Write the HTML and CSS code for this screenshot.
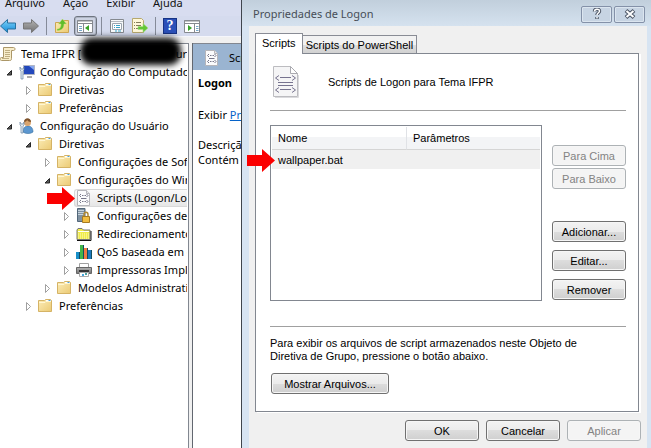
FILE: index.html
```html
<!DOCTYPE html>
<html lang="pt-BR">
<head>
<meta charset="utf-8">
<title>Propriedades de Logon</title>
<link rel="stylesheet" href="styles.css">
</head>
<body>
<svg class="defs" aria-hidden="true">
  <defs>
    <linearGradient id="gold" x1="0" y1="0" x2="1" y2="1"><stop offset="0" stop-color="#fcedb8"/><stop offset="1" stop-color="#ebca74"/></linearGradient>
    <linearGradient id="sky" x1="0" y1="0" x2="0" y2="1"><stop offset="0" stop-color="#7fd4fa"/><stop offset="1" stop-color="#148bd8"/></linearGradient>
    <linearGradient id="steel" x1="0" y1="0" x2="0" y2="1"><stop offset="0" stop-color="#b4b4b4"/><stop offset="1" stop-color="#717171"/></linearGradient>
  </defs>
  <symbol id="folder" viewBox="0 0 16 16">
    <path d="M.5 13.500v-11h6l1-1h5l1 1v11z" fill="url(#gold)" stroke="#d5b365"/>
    <path d="M8 2.500h5" stroke="#fff"/><path d="M10.500 2.500h2" stroke="#4ba0dc"/>
    <path d="M1 4.500h6l1-1h5" fill="none" stroke="#fff6d2"/>
  </symbol>
  <symbol id="script" viewBox="0 0 16 16">
    <path d="M1.500.500h9l3 3v12h-12z" fill="#fbfbfc" stroke="#b5b5ba"/>
    <path d="M10.500.500v3h3" fill="#e7e7ea" stroke="#b5b5ba"/>
    <path d="M5 4 3.500 5.500 5 7M10.500 4 12 5.500 10.500 7M6 5.500h1.500m1 0H10M5 8.500h5.500M5 10l-1.500 1.500L5 13M10.500 10l1.500 1.500-1.500 1.500M6 11.500h1.500m1 0H10" fill="none" stroke="#77778a"/>
  </symbol>
  <symbol id="closed" viewBox="0 0 8 10"><path d="M1.500 1.500 5.500 5.500 1.500 9.500z" fill="#fff" stroke="#a0a0a0"/></symbol>
  <symbol id="open" viewBox="0 0 8 10"><path d="M5.500 3.500v4.500H1z" fill="#595959" stroke="#262626"/></symbol>
  <symbol id="pointer" viewBox="0 0 28 23"><path d="M0 6h15V0l13 11.500L15 23v-6H0z" fill="#fb0000"/></symbol>
</svg>
<div class="desktop">
  <div class="console">
    <nav class="menu">
      <a href="#">Arquivo</a><a href="#">Ação</a><a href="#">Exibir</a><a href="#">Ajuda</a>
    </nav>
    <div class="toolbar">
      <button class="tool" aria-label="Voltar"><svg viewBox="0 0 16 16"><path d="M.5 8 7.500 1.500V5h8v6h-8v3.500z" fill="url(#sky)" stroke="#28719f"/></svg></button>
      <button class="tool" aria-label="Avançar"><svg viewBox="0 0 16 16"><path d="M15.500 8 8.500 1.500V5h-8v6h8v3.500z" fill="url(#steel)" stroke="#777"/></svg></button>
      <i class="sep"></i>
      <button class="tool" aria-label="Um nível acima"><svg viewBox="0 0 16 16"><path d="M1.500 14.500v-10H7l1-2h6.500v12z" fill="url(#gold)" stroke="#cda653"/><path d="M3 11c3 0 4-2 4-5H4.500L8.500 1l4 5H10c0 4-2 6.500-7 6.500z" fill="#60bd2b" stroke="#c7dc76" stroke-width=".5"/></svg></button>
      <button class="tool pressed" aria-label="Mostrar árvore" aria-pressed="true"><svg viewBox="0 0 16 16"><path d="M.5 2.500h15v12H.5z" fill="#fff" stroke="#85898f"/><path d="M0 3h16M0 5.500h16M6.500 6v9" stroke="#85898f"/><path d="M2 8.500h3M2 10.500h3M2 12.500h3" stroke="#75a6c8"/><path d="M12 7v6L8 10z" fill="#3aa329"/></svg></button>
      <i class="sep"></i>
      <button class="tool" aria-label="Propriedades"><svg viewBox="0 0 16 16"><path d="M1.500 1.500h13v13h-13z" fill="#f8fafb" stroke="#85898f"/><path d="M2 3.500h12" stroke="#b6bbc1"/><path d="M3.500 5.500h9v6h-9z" fill="#fff" stroke="#9da6b0"/><path d="M5 7.500h1m1 0h4M5 9.500h1m1 0h4M6 13h2m1 0h3" stroke="#39a3c7"/></svg></button>
      <button class="tool" aria-label="Exportar lista"><svg viewBox="0 0 16 16"><path d="M.5.500h9l2 2v12H.5z" fill="#fff8d8" stroke="#b6a86e"/><path d="M2 4.500h1m1 0h5M2 7.500h1m1 0h5M2 10.500h1m1 0h5" stroke="#857d5b"/><path d="M6 8.500h5V5.500l5 4.500-5 4.500v-3H6z" fill="#62c735" stroke="#a7da87" stroke-width=".6"/></svg></button>
      <i class="sep"></i>
      <button class="tool help" aria-label="Ajuda">?</button>
      <button class="tool" aria-label="Mostrar painel de ações"><svg viewBox="0 0 16 16"><path d="M.5 2.500h15v12H.5z" fill="#fff" stroke="#85898f"/><path d="M0 3h16M0 5.500h16M10.500 6v9" stroke="#85898f"/><path d="M12 8.500h2.500M12 10.500h2.500M12 12.500h2.500" stroke="#75a6c8"/><path d="M4 7v6l4-3z" fill="#3aa329"/></svg></button>
    </div>
    <div class="panes">
      <ul class="tree">
        <li class="row root"><svg class="icon" viewBox="0 0 16 16"><path d="M3.500 1.500h10c2 0 2 3 0 3h-2v8c0 2-1 2-2 2h-8c-2 0-2-3 0-3h2z" fill="#f8edca" stroke="#ab9768"/><path d="M5 4.500h5M5 6.500h5M5 8.500h5M5 10.500h5M2 12.500h7" stroke="#bfae82"/></svg><span>Tema IFPR [</span><span class="tail">ur</span><i class="blot"></i></li>
        <li class="row l1"><svg class="twist"><use href="#open"/></svg><svg class="icon" viewBox="0 0 16 16"><path d="M4.500 1.500h11v9h-11z" fill="#2348bc" stroke="#b0b5c4"/><path d="M10 2h5v4z" fill="#86a7f1"/><path d="M8 12h5v2H8z" fill="#aaa"/><path d="M1 3v3l1 1v8h2V7l1-1V3L4 5H2z" fill="#e5edf4" stroke="#6884a0" stroke-width=".7"/></svg><span>Configuração do Computador</span></li>
        <li class="row l2"><svg class="twist"><use href="#closed"/></svg><svg class="icon"><use href="#folder"/></svg><span>Diretivas</span></li>
        <li class="row l2"><svg class="twist"><use href="#closed"/></svg><svg class="icon"><use href="#folder"/></svg><span>Preferências</span></li>
        <li class="row l1"><svg class="twist"><use href="#open"/></svg><svg class="icon" viewBox="0 0 16 16"><path d="M4 14c0-4 2-6 5-6s5 2 5 6c-3 2-7 2-10 0z" fill="#5c97d0" stroke="#39709f" stroke-width=".6"/><circle cx="8.500" cy="4.500" r="3.500" fill="#d9a46d"/><path d="M5 4c0-5 7-5 7 0-2 0-3-1-4-2 0 1-2 2-3 2z" fill="#7d522b"/><path d="M1 4v3l1 1v7h2V8l1-1V4L4 6H2z" fill="#e5edf4" stroke="#6884a0" stroke-width=".7"/></svg><span>Configuração do Usuário</span></li>
        <li class="row l2"><svg class="twist"><use href="#open"/></svg><svg class="icon"><use href="#folder"/></svg><span>Diretivas</span></li>
        <li class="row l3"><svg class="twist"><use href="#closed"/></svg><svg class="icon"><use href="#folder"/></svg><span>Configurações de Software</span></li>
        <li class="row l3"><svg class="twist"><use href="#open"/></svg><svg class="icon"><use href="#folder"/></svg><span>Configurações do Windows</span></li>
        <li class="row l4 selected"><svg class="arrow"><use href="#pointer"/></svg><i class="twist"></i><svg class="icon"><use href="#script"/></svg><span>Scripts (Logon/Logoff)</span></li>
        <li class="row l4"><svg class="twist"><use href="#closed"/></svg><svg class="icon" viewBox="0 0 16 16"><path d="M1.500.500H9v13H1.500z" fill="#8192a1" stroke="#52677a"/><path d="M2 2.500h6M2 4.500h6M2 6.500h6" stroke="#c7d4de"/><path d="M8 9V6.500c0-3 4-3 4 0V9" fill="none" stroke="#b08a35" stroke-width="1.500"/><path d="M6.500 8.500h7v6h-7z" fill="#f1bd41" stroke="#a67b22"/></svg><span>Configurações de Segurança</span></li>
        <li class="row l4"><svg class="twist"><use href="#closed"/></svg><svg class="icon" viewBox="0 0 16 16"><path d="M1 13.500V4l1-1.500h4L7.500 4H14v9.500z" fill="#f0ec4b" stroke="#777"/><path d="M2 5.500h11" stroke="#fff"/><path d="M2 8h11M2 10h11M2 12h11" stroke="#fffbc2" stroke-dasharray="1 1"/><path d="M1 14.500h14V5" fill="none" stroke="#111"/></svg><span>Redirecionamento de Pasta</span></li>
        <li class="row l4"><svg class="twist"><use href="#closed"/></svg><svg class="icon" viewBox="0 0 16 16"><path d="M0 8h4v7H0z" fill="#188fc8"/><path d="M4 1h4v14H4z" fill="#43b649"/><path d="M8 4h4v11H8z" fill="#f27a43"/><path d="M12 6h4v9h-4z" fill="#1d78bd"/><path d="M3.500 8v7M7.500 1v14M11.500 4v11M15.500 6v9" stroke="#124d60"/></svg><span>QoS baseada em diretiva</span></li>
        <li class="row l4"><svg class="twist"><use href="#closed"/></svg><svg class="icon" viewBox="0 0 16 16"><path d="M3.500 1.500h9v4h-9z" fill="#fff" stroke="#a1a1a1"/><path d="M.5 5.500h15v6H.5z" fill="url(#steel)" stroke="#666"/><path d="M3 8h10v2H3z" fill="#343434"/><path d="M3.500 10.500h9v4h-9z" fill="#fff" stroke="#aaa"/><path d="M6 12h2v2H6z" fill="#47a6dc"/><path d="M9 11h2v2H9z" fill="#4ba19c"/></svg><span>Impressoras Implantadas</span></li>
        <li class="row l3"><svg class="twist"><use href="#closed"/></svg><svg class="icon"><use href="#folder"/></svg><span>Modelos Administrativos</span></li>
        <li class="row l2"><svg class="twist"><use href="#closed"/></svg><svg class="icon"><use href="#folder"/></svg><span>Preferências</span></li>
      </ul>
      <section class="detail">
        <header><svg class="icon"><use href="#script"/></svg><span>Scripts</span></header>
        <div class="info">
          <h2>Logon</h2>
          <p>Exibir <a href="#">Propriedades</a></p>
          <p>Descrição:<br>Contém</p>
        </div>
      </section>
    </div>
  </div>

  <section class="dialog">
    <header class="title">
      <h1>Propriedades de Logon</h1>
      <button class="caption" aria-label="Ajuda"><svg viewBox="0 0 12 12"><path d="M3.500 3.500c0-3 5-3 5-.5 0 2-2.500 2-2.500 4M6 9v2" fill="none" stroke="#4c5565" stroke-width="3.500"/><path d="M3.500 3.500c0-3 5-3 5-.5 0 2-2.500 2-2.500 4M6 9v1.500" fill="none" stroke="#fff" stroke-width="1.500"/></svg></button>
      <button class="caption" aria-label="Fechar"><svg viewBox="0 0 12 12"><path d="m2 2.500 8 7m0-7-8 7" stroke="#4c5565" stroke-width="4"/><path d="m2.500 3 7 6m0-6-7 6" stroke="#fff" stroke-width="2"/></svg></button>
    </header>
    <div class="body">
      <div class="tabs" role="tablist">
        <button class="tab active" role="tab" aria-selected="true">Scripts</button><button class="tab" role="tab" aria-selected="false">Scripts do PowerShell</button>
      </div>
      <div class="panel" role="tabpanel">
        <div class="intro">
          <svg class="document" viewBox="0 0 26 32"><path d="M.5.500h17l7 7v23H.5z" fill="#f5f5f6" stroke="#bcbcc0"/><path d="M2 31.500h23.500V9" fill="none" stroke="#dadadd"/><path d="M17.500.500v7h7z" fill="#fff" stroke="#aaaab0"/><path d="M6 9.500 2.500 12 6 14.500M19 9.500l3.500 2.500-3.500 2.500M7 11.500h11M5 16.500h15M5 19.500h15M6 21.500 2.500 24 6 26.500M19 21.500l3.500 2.500-3.500 2.500M7 23.500h11" fill="none" stroke="#77738f"/></svg>
          <span>Scripts de Logon para Tema IFPR</span>
        </div>
        <hr>
        <div class="work">
          <div class="list">
            <svg class="arrow"><use href="#pointer"/></svg>
            <table>
              <thead><tr><th>Nome</th><th>Parâmetros</th></tr></thead>
              <tbody><tr><td>wallpaper.bat</td><td></td></tr></tbody>
            </table>
          </div>
          <div class="actions">
            <div class="order"><button class="btn" disabled>Para Cima</button><button class="btn" disabled>Para Baixo</button></div>
            <div class="edit"><button class="btn">Adicionar...</button><button class="btn">Editar...</button><button class="btn">Remover</button></div>
          </div>
        </div>
        <hr class="lower">
        <p class="note">Para exibir os arquivos de script armazenados neste Objeto de Diretiva de Grupo, pressione o botão abaixo.</p>
        <button class="btn wide">Mostrar Arquivos...</button>
      </div>
      <footer><button class="btn">OK</button><button class="btn">Cancelar</button><button class="btn" disabled>Aplicar</button></footer>
    </div>
  </section>
</div>
</body>
</html>
```
FILE: styles.css
```css
* { box-sizing: border-box; }
body { margin: 0; font: 11px/18px "Noto Sans", "Open Sans", sans-serif; color: #000; }
button { font: inherit; color: inherit; padding: 0; border: 0; background: none; }
h1, h2, p, ul { margin: 0; padding: 0; }
svg { display: block; }
.defs { position: absolute; width: 0; height: 0; }
.desktop { display: grid; grid-template-columns: 241px minmax(0, 1fr); min-height: 100vh; overflow: hidden; }

.console { display: flex; flex-direction: column; min-width: 0; overflow: hidden; background: #f0f0f0; }
.menu { display: flex; gap: 18px; height: 16px; padding-left: 5px; overflow: hidden; background: #d8ddf0; line-height: 5px; }
.menu a { color: #111; text-decoration: none; }
.toolbar { display: flex; align-items: center; gap: 7px; height: 21px; background: #d5dbee; border-bottom: 1px solid #f5f6fb; }
.tool { width: 16px; height: 16px; flex: none; }
.tool svg { width: 16px; height: 16px; }
.pressed { width: 23px; height: 20px; margin: 0 -3px; padding: 1px 2px; border: 1px solid #6f7580; border-radius: 3px; background: #cdd3e2; box-shadow: inset 0 0 0 1px #aeb5c4; }
.sep { width: 1px; height: 18px; background: #858b99; flex: none; }
.help { width: 14px; color: #fff; background: #2b50b8; border: 1px solid #183485; font: bold 14px/14px "Liberation Serif", serif; text-align: center; }

.panes { display: grid; grid-template-columns: 189px minmax(0, 1fr); gap: 3px; flex: 1; margin-top: 6px; }
.tree { list-style: none; min-width: 0; padding-top: 1px; background: #fff; border-top: 1px solid #828790; border-right: 1px solid #828790; }
.row { position: relative; display: flex; align-items: center; height: 18px; white-space: nowrap; margin-right: 1px; }
.row > span { min-width: 0; overflow: hidden; }
.icon { width: 16px; height: 16px; flex: none; margin-right: 5px; }
.twist { width: 8px; height: 10px; flex: none; margin: 0 5px 0 6px; }
.l2 { padding-left: 19px; }
.l3 { padding-left: 38px; }
.l4 { padding-left: 57px; }
.selected::before { content: ""; position: absolute; inset: 0 0 0 74px; border: 1px solid #d9d9d9; border-right: 0; border-radius: 3px 0 0 3px; background: linear-gradient(#fafafa, #e6e6e6); }
.selected > * { position: relative; }
.arrow { position: absolute; z-index: 2; width: 28px; height: 23px; }
.row .arrow { position: absolute; left: 47px; top: -2px; }
.row .tail { margin-left: auto; }
.blot { position: absolute; z-index: 1; left: 80px; right: 6px; top: -7px; height: 27px; border-radius: 12px; background: #000; filter: blur(3px); }

.detail { min-width: 0; overflow: hidden; background: #fff; border-left: 1px solid #626770; white-space: nowrap; }
.detail header { display: flex; align-items: center; height: 27px; padding-left: 11px; padding-top: 2px; background: #9ab4d1; border-top: 1px solid #828790; }
.detail header .icon { margin-right: 9px; }
.info { display: grid; gap: 15px; padding: 4px 0 0 5px; line-height: 15px; }
.info h2 { font-size: 11px; line-height: 18px; }
.info a { color: #0663c9; }

.dialog { min-width: 0; display: flex; flex-direction: column; padding: 0 4px 0 7px; border-left: 1px solid #3f454d; background: #d7e4f2; font: 11px/14px "Liberation Sans", sans-serif; }
.title { display: flex; align-items: center; gap: 2px; height: 26px; margin: 0 -4px 0 -7px; padding: 2px 6px 0 11px; background: linear-gradient(#c1cfdc, #d5e2ef); }
.title h1 { flex: 1; font: 11px/18px "Noto Sans", "Open Sans", sans-serif; color: #474e57; }
.caption { display: grid; place-items: center; width: 31px; height: 17px; border: 1px solid #8491a8; border-radius: 2px; background: #c7d4e3; box-shadow: inset 0 0 0 1px #dbe5ef; }
.caption svg { width: 12px; height: 12px; }
.body { display: flex; flex-direction: column; flex: 1; padding: 7px 6px 7px 6px; background: #f0f0f0; }
.tabs { display: flex; align-items: flex-end; height: 21px; margin-bottom: -1px; }
.tab { height: 19px; padding: 0 3px; border: 1px solid #898c95; background: linear-gradient(#f2f2f2 50%, #dedede 50%, #d2d2d2); }
.tab.active { position: relative; height: 21px; padding: 0 6px 2px; border-bottom: 0; background: #fff; }
.tab + .tab { border-left: 0; }
.panel { margin-right: 2px; padding: 12px 12px 17px 14px; background: #fff; border: 1px solid #828790; box-shadow: 2px 1px #fff; }
.intro { display: flex; align-items: center; gap: 29px; padding-left: 3px; }
.document { width: 26px; height: 32px; }
hr { width: 100%; margin: 12px 0 14px; border: 0; border-top: 1px solid #a0a0a0; }
hr.lower { margin: 25px 0 10px; }
.work { display: flex; justify-content: space-between; gap: 10px; }
.list { position: relative; flex: 1; min-height: 176px; padding: 1px; border: 1px solid #828790; }
.list .arrow { left: -24px; top: 23px; }
table { width: 100%; border-spacing: 0; table-layout: fixed; }
th, td { padding: 0 6px; font-weight: normal; text-align: left; white-space: nowrap; }
th { height: 23px; border-bottom: 1px solid #d5d5d5; background: linear-gradient(#fff 45%, #f3f4f6 45%); }
th + th { border-left: 1px solid #e0e2e6; }
td { height: 19px; background: #f0f0f0; }
.actions { display: flex; flex-direction: column; justify-content: space-between; width: 74px; padding: 20px 0 1px; }
.order { display: grid; gap: 2px; }
.edit { display: grid; gap: 8px; }
.btn { width: 74px; height: 21px; border: 1px solid #707070; border-radius: 3px; background: linear-gradient(#f3f3f3, #ebebeb 50%, #dddddd 50%, #cfcfcf); box-shadow: inset 0 0 0 1px #f6f6f6; }
.btn:disabled { color: #838383; border-color: #adb2b5; background: #f4f4f4; }
.note { max-width: 310px; line-height: 13px; }
.wide { display: block; width: 118px; margin: 10px 0 0 1px; }
footer { display: flex; justify-content: flex-end; gap: 7px; margin-top: 8px; }
```
